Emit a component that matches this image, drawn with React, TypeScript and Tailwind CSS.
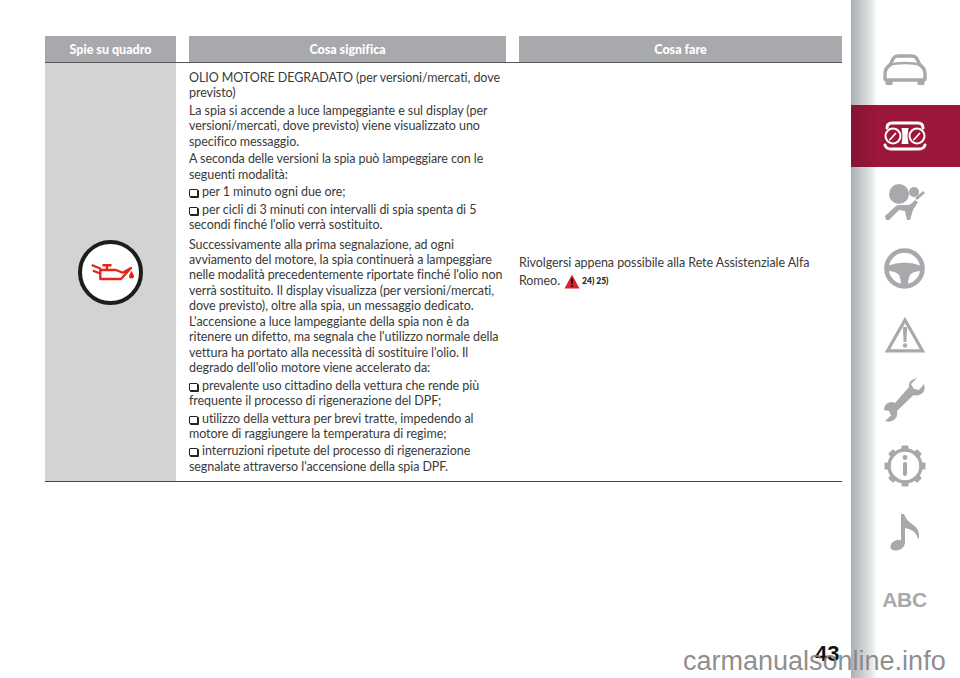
const gray = "#a7a9ac";

function Bullet() {
  return <span className="inline-block w-[9px] h-[8px] mr-[4px] align-[-1px] bg-white border-[1.5px] border-[#222] rounded-[1px] shadow-[1px_1px_0_#222]" />;
}

function Para({ lines, bullet, extra }: { lines: string[]; bullet?: boolean; extra?: boolean }) {
  return (
    <div className={extra ? "mt-[4px]" : "mt-[2px] first:mt-0"}>
      {lines.map((l, i) => (
        <div key={i} className="whitespace-nowrap">
          {bullet && i === 0 ? <Bullet /> : null}
          {l}
        </div>
      ))}
    </div>
  );
}

function CarIcon() {
  return (
    <svg width="44" height="32" viewBox="0 0 44 32" fill="none" stroke={gray} strokeWidth="3.400" strokeLinejoin="round" strokeLinecap="round">
      <path d="M7 11 L10.500 4 Q12 2 15 2 H29 Q32 2 33.500 4 L37 11" />
      <path d="M7 11 Q12 9 22 9 Q32 9 37 11" strokeWidth="2.400" />
      <path d="M7 11 Q2 14 2 20 V25 Q2 26 4 26 H40 Q42 26 42 25 V20 Q42 14 37 11" />
      <path d="M3.500 27 V30 H8.500 V27 M35.500 27 V30 H40.500 V27" fill={gray} strokeWidth="2" />
    </svg>
  );
}

function GaugeIcon() {
  return (
    <svg width="44" height="30" viewBox="0 0 44 30" fill="none" stroke="#fff" strokeLinecap="round">
      <path d="M4 7 Q4 2 9 2 H35 Q40 2 40 7" strokeWidth="3" />
      <path d="M2 24 Q3 28 8 28 H36 Q41 28 42 24" strokeWidth="3" />
      <circle cx="10" cy="15" r="7.500" strokeWidth="2" />
      <circle cx="34" cy="15" r="7.500" strokeWidth="2" />
      <path d="M7 18.500 L12.500 12.500 M31 18.500 L36.500 12.500" strokeWidth="1.800" />
      <path d="M18.500 7 H25.500 L24.500 15 L25.500 23 H18.500 L19.500 15 Z" fill="#fff" stroke="none" />
    </svg>
  );
}

function AirbagIcon() {
  return (
    <svg width="42" height="38" viewBox="0 0 42 38" fill={gray}>
      <circle cx="15" cy="11" r="10" />
      <circle cx="30" cy="9" r="5" />
      <path d="M39 8 L41 10 L33 17 L31 15 Z" />
      <path d="M1 33 L12 23 Q14 21.500 17 22 L24 22 Q26 22 28 20 L31 17 L34 19 L29 27 L26 37 L23 37 L21 28 L15 27 L5 37 L2 37 Z" />
    </svg>
  );
}

function WheelIcon() {
  return (
    <svg width="41" height="41" viewBox="0 0 41 41">
      <circle cx="20.500" cy="20.500" r="18" fill="none" stroke={gray} strokeWidth="4.600" />
      <path d="M3 18 Q20.500 11 38 18 L38 23 Q29 23 26 27 Q24 31 24 38 H17 Q17 31 15 27 Q12 23 3 23 Z" fill={gray} />
    </svg>
  );
}

function TriangleIcon() {
  return (
    <svg width="42" height="37" viewBox="0 0 42 37">
      <path d="M21 4 L38.500 34.800 H3.500 Z" fill="none" stroke={gray} strokeWidth="3.200" />
      <path d="M18.800 11 H23.200 L22.400 26 H19.600 Z" fill={gray} />
      <circle cx="21" cy="29.500" r="2.200" fill={gray} />
    </svg>
  );
}

function WrenchIcon() {
  return (
    <svg width="41" height="45" viewBox="0 0 41 45" fill={gray}>
      <path d="M33 0 L27 6 L30 11 L35 12 L40 6 Q42 13 37 16 Q33 18.500 29.500 17 L13 33 Q14 38 11 41 Q7 45 1 43 L7 37.500 L5 33 L0 32 Q0 26 5 24.500 Q8 23.500 11 25 L25 9 Q24 2 33 0 Z" />
    </svg>
  );
}

function GearInfoIcon() {
  const teeth = [0, 45, 90, 135, 180, 225, 270, 315];
  return (
    <svg width="42" height="42" viewBox="0 0 42 42">
      <circle cx="21" cy="21" r="16" fill="none" stroke={gray} strokeWidth="3.400" />
      {teeth.map((a) => (
        <rect key={a} x="17.500" y="0.500" width="7" height="6" rx="1" fill={gray} transform={`rotate(${a} 21 21)`} />
      ))}
      <circle cx="21" cy="12.500" r="2.400" fill={gray} />
      <rect x="19" y="17" width="4" height="14" rx="2" fill={gray} />
    </svg>
  );
}

function NoteIcon() {
  return (
    <svg width="30" height="37" viewBox="0 0 30 37" fill={gray}>
      <path d="M11 0 H14 Q16 6 22 10 Q30 15 29 24 Q28.500 26 27 22 Q25 16 15 14 V29 Q14 35 7 36.500 Q1 37 0.500 33 Q0 28 7 26 Q9.500 25.500 11 26.500 Z" />
    </svg>
  );
}

const navIcons = [
  <CarIcon />,
  <GaugeIcon />,
  <AirbagIcon />,
  <WheelIcon />,
  <TriangleIcon />,
  <WrenchIcon />,
  <GearInfoIcon />,
  <NoteIcon />,
  <span className="font-['Liberation_Sans',sans-serif] font-bold text-[21px] leading-none tracking-[-0.300px] text-[#a7a9ac] mt-[2px]">ABC</span>,
];

export default function App() {
  return (
    <div className="relative w-[960px] h-[678px] overflow-hidden bg-white flex font-['Lato','Noto_Sans',sans-serif] text-[#3a3a3a] [font-variant-ligatures:none]">
      <main className="w-[851px] pl-[45px] pr-[9px] pt-[36px] text-[12.500px] leading-[15.450px] tracking-[-0.070px]">
        <div className="grid grid-cols-[131px_317px_323px] gap-x-[13px] h-[27px] border-b border-[#555] tracking-normal">
          {["Spie su quadro", "Cosa significa", "Cosa fare"].map((h) => (
            <div key={h} className="bg-[#a7a9ac] text-white font-black text-[12.500px] pt-[1px] flex items-center justify-center">
              {h}
            </div>
          ))}
        </div>
        <div className="grid grid-cols-[131px_317px_323px] gap-x-[13px] h-[419px] border-b border-[#444]">
          <div className="bg-[#d1d3d4] flex items-center justify-center">
            <div className="w-[65px] h-[65px] rounded-full bg-white border-[4px] border-[#1d1d1b] flex items-center justify-center">
              <svg width="46" height="22" viewBox="0 0 46 22" fill="none" stroke="#e1251b" strokeWidth="2.300" strokeLinejoin="round">
                <path d="M3.700 4 L12.300 7.500 V18 H33 L43 7 L34.700 11.700 L28 9 H13 M12.300 12.500 L5.700 10 Z" />
                <path d="M19 9 V4.300 M14.500 4.300 H23.500" strokeWidth="2.400" />
                <path d="M43.500 10 Q41 14 41 15.500 Q41 17.500 43.500 17.500 Q46 17.500 46 15.500 Q46 14 43.500 10 Z" fill="#e1251b" stroke="none" />
              </svg>
            </div>
          </div>
          <div className="pt-[7px]">
            <Para lines={["OLIO MOTORE DEGRADATO (per versioni/mercati, dove", "previsto)"]} />
            <Para lines={["La spia si accende a luce lampeggiante e sul display (per", "versioni/mercati, dove previsto) viene visualizzato uno", "specifico messaggio."]} />
            <Para lines={["A seconda delle versioni la spia può lampeggiare con le", "seguenti modalità:"]} />
            <Para bullet lines={["per 1 minuto ogni due ore;"]} />
            <Para bullet lines={["per cicli di 3 minuti con intervalli di spia spenta di 5", "secondi finché l'olio verrà sostituito."]} />
            <Para extra lines={["Successivamente alla prima segnalazione, ad ogni", "avviamento del motore, la spia continuerà a lampeggiare", "nelle modalità precedentemente riportate finché l'olio non", "verrà sostituito. Il display visualizza (per versioni/mercati,", "dove previsto), oltre alla spia, un messaggio dedicato.", "L'accensione a luce lampeggiante della spia non è da", "ritenere un difetto, ma segnala che l'utilizzo normale della", "vettura ha portato alla necessità di sostituire l'olio. Il", "degrado dell'olio motore viene accelerato da:"]} />
            <Para bullet lines={["prevalente uso cittadino della vettura che rende più", "frequente il processo di rigenerazione del DPF;"]} />
            <Para bullet lines={["utilizzo della vettura per brevi tratte, impedendo al", "motore di raggiungere la temperatura di regime;"]} />
            <Para bullet lines={["interruzioni ripetute del processo di rigenerazione", "segnalate attraverso l'accensione della spia DPF."]} />
          </div>
          <div className="flex flex-col justify-center leading-[18px]">
            <div className="whitespace-nowrap">Rivolgersi appena possibile alla Rete Assistenziale Alfa</div>
            <div className="whitespace-nowrap flex items-center">
              Romeo.
              <svg className="ml-[4px] mr-[2px]" width="16" height="15" viewBox="0 0 16 15">
                <path d="M8 0.500 L15.500 14.500 H0.500 Z" fill="#d8232a" />
                <path d="M7 4.500 H9 L8.700 10 H7.300 Z" fill="#111" />
                <circle cx="8" cy="12" r="1.100" fill="#111" />
              </svg>
              <span className="font-black text-[8.500px] tracking-normal text-[#222]">24) 25)</span>
            </div>
          </div>
        </div>
      </main>
      <aside className="w-[109px] h-[678px] pt-[37px] pr-[2px] bg-[linear-gradient(to_right,#a9afb4,#e6e8e8_80%,#ffffff)] bg-[length:26px_100%] bg-no-repeat flex flex-col">
        {navIcons.map((ic, i) => (
          <div key={i} className="h-[66px] shrink-0 flex flex-col justify-center">
            <div className={i === 1 ? "h-[62px] -mr-[2px] pr-[2px] flex items-center justify-center bg-[linear-gradient(to_right,#861433,#9c1739_25%)]" : "flex items-center justify-center"}>
              {ic}
            </div>
          </div>
        ))}
      </aside>
      <div className="absolute left-[815px] top-[642px] font-['Liberation_Sans',sans-serif] font-bold text-[22px] leading-[24px] text-[#111]">43</div>
      <div className="absolute left-[683px] top-[646px] font-['Liberation_Sans',sans-serif] text-[27px] leading-[30px] text-[#808080]/90">carmanualsonline.info</div>
    </div>
  );
}
